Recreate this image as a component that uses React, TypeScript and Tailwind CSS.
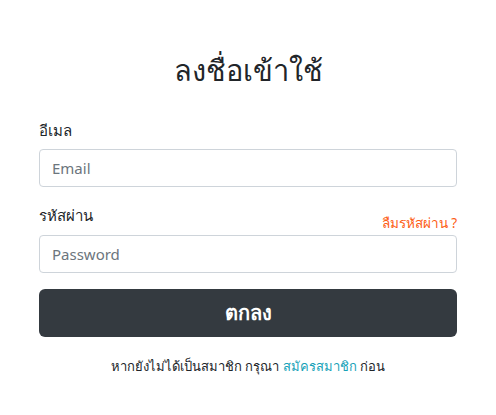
export default function App() {
  return (
    <div className="w-[496px] h-[415px] bg-white" style={{ fontFamily: '"Noto Sans", sans-serif' }}>
      <div className="w-[418px] mx-auto pt-[48px]">
        <h1 className="text-center text-[29px] leading-[44px] text-[#212529]">ลงชื่อเข้าใช้</h1>
        <div className="mt-[26px] text-[15px] leading-[24px] text-[#212529]">อีเมล</div>
        <input
          className="mt-[7px] w-full h-[38px] rounded-[4px] border border-[#ced4da] px-[12px] text-[15px] text-[#495057] placeholder:text-[#6c757d] outline-none"
          placeholder="Email"
        />
        <div className="mt-[16px] flex items-end justify-between">
          <span className="text-[15px] leading-[24px] text-[#212529] mb-[8px]">รหัสผ่าน</span>
          <span className="text-[13.5px] leading-[20px] text-[#fd5d14] mb-[2px]">ลืมรหัสผ่าน ?</span>
        </div>
        <input
          type="password"
          className="w-full h-[38px] rounded-[4px] border border-[#ced4da] px-[12px] text-[15px] text-[#495057] placeholder:text-[#6c757d] outline-none"
          placeholder="Password"
        />
        <button className="mt-[16px] w-full h-[48px] rounded-[6px] bg-[#343a40] text-white text-[20px] font-semibold">
          ตกลง
        </button>
        <p className="mt-[19px] text-center text-[13px] leading-[20px] text-[#212529]">
          หากยังไม่ได้เป็นสมาชิก กรุณา <a className="text-[#17a2b8]">สมัครสมาชิก</a> ก่อน
        </p>
      </div>
    </div>
  );
}
